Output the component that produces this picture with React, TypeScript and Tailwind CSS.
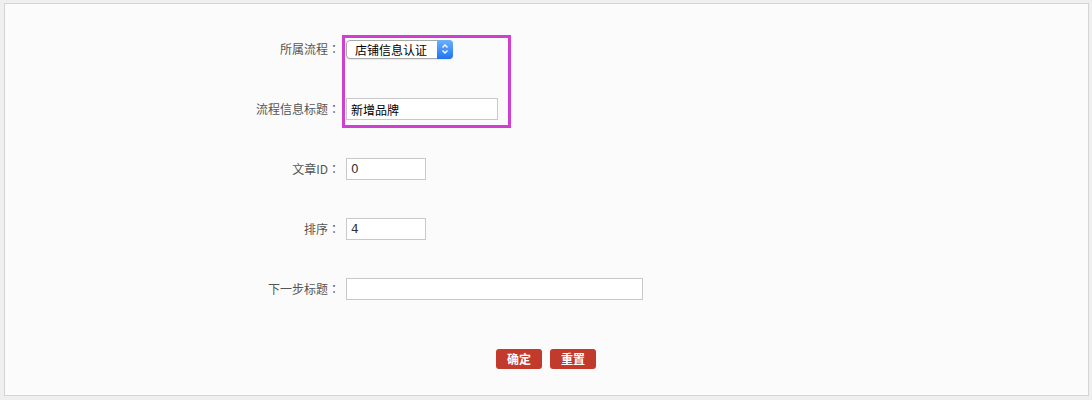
import React from "react";

const labelCls =
  "w-[338px] shrink-0 text-right text-[12px] text-[#555] pr-[3px]";
const inputCls =
  "h-[22px] border border-[#c9c9c9] bg-white px-[4px] text-[12px] text-[#333] outline-none";

function Label({ text }: { text: string }) {
  return (
    <label className={labelCls}>
      {text}
      <span className="font-['Noto_Sans_CJK_TC']">：</span>
    </label>
  );
}

function FakeSelect({ value }: { value: string }) {
  return (
    <div className="flex h-[19px] w-[107px] items-stretch rounded-[4px] border border-[#a9a9a9] bg-white shadow-[0_1px_1px_rgba(0,0,0,0.08)]">
      <span className="flex-1 pl-[8px] text-[12px] leading-[17px] text-black">
        {value}
      </span>
      <span className="-my-px -mr-px flex w-[16px] items-center justify-center rounded-r-[4px] bg-gradient-to-b from-[#6ab0ff] to-[#1f73f0]">
        <svg width="8" height="12" viewBox="0 0 8 12" fill="none">
          <path d="M1.5 4.5 L4 2 L6.5 4.5" stroke="#fff" strokeWidth="1.4" />
          <path d="M1.5 7.5 L4 10 L6.5 7.5" stroke="#fff" strokeWidth="1.4" />
        </svg>
      </span>
    </div>
  );
}

export default function App() {
  return (
    <div
      className="relative h-[400px] w-[1092px] bg-[#efefef] pl-[4px] pt-[3px]"
      style={{ fontFamily: '"Noto Sans CJK SC", "Noto Sans", sans-serif' }}
    >
      <div className="h-[393px] w-[1085px] border border-[#d4d4d4] bg-[#fbfbfb] pt-[15px]">
        {/* 所属流程 */}
        <div className="flex h-[60px] items-center">
          <Label text="所属流程" />
          <div className="ml-[3px]">
            <FakeSelect value="店铺信息认证" />
          </div>
        </div>

        {/* 流程信息标题 */}
        <div className="flex h-[60px] items-center">
          <Label text="流程信息标题" />
          <input
            className={`${inputCls} ml-[3px] w-[152px] text-black`}
            defaultValue="新增品牌"
          />
        </div>

        {/* 文章ID */}
        <div className="flex h-[60px] items-center">
          <Label text="文章ID" />
          <input
            className={`${inputCls} ml-[3px] w-[80px] font-['DejaVu_Sans'] text-[11px]`}
            defaultValue="0"
          />
        </div>

        {/* 排序 */}
        <div className="flex h-[60px] items-center">
          <Label text="排序" />
          <input
            className={`${inputCls} ml-[3px] w-[80px] font-['DejaVu_Sans'] text-[11px]`}
            defaultValue="4"
          />
        </div>

        {/* 下一步标题 */}
        <div className="flex h-[60px] items-center">
          <Label text="下一步标题" />
          <input className={`${inputCls} ml-[3px] w-[297px]`} defaultValue="" />
        </div>

        <div className="mt-[30px] flex justify-center gap-[8px] pr-[1px]">
          <button className="h-[20px] w-[46px] rounded-[3px] bg-[#c23a2b] text-[12px] font-bold leading-[20px] text-white">
            确定
          </button>
          <button className="h-[20px] w-[46px] rounded-[3px] bg-[#c23a2b] text-[12px] font-bold leading-[20px] text-white">
            重置
          </button>
        </div>
      </div>

      {/* annotation box */}
      <div className="pointer-events-none absolute left-[342px] top-[35px] h-[93px] w-[169px] border-[3px] border-[#cf3fd0]" />
    </div>
  );
}
